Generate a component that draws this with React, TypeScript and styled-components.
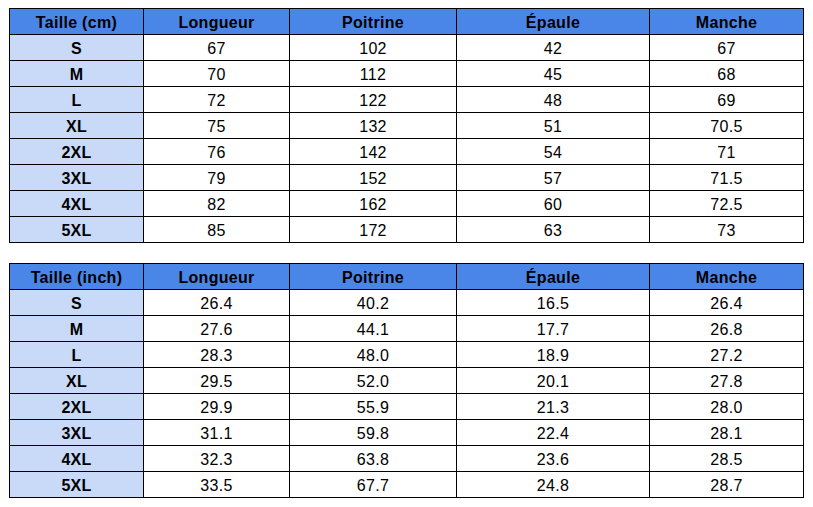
import React from "react";
import styled, { createGlobalStyle } from "styled-components";

const GlobalStyle = createGlobalStyle`
  html, body {
    margin: 0;
    padding: 0;
    background: #ffffff;
  }
`;

const Page = styled.div`
  display: flex;
  flex-direction: column;
  gap: 20px;
  padding: 8px 0 0 9px;
  font-family: "Liberation Sans", Arial, sans-serif;
`;

const Table = styled.table`
  border-collapse: collapse;
  table-layout: fixed;
  width: 795px;
  color: #000;
`;

const HeadCell = styled.th`
  background: #4a86e8;
  border: 1px solid #000;
  height: 26px;
  box-sizing: border-box;
  padding: 2px 0 0;
  line-height: 22px;
  font-size: 16px;
  font-weight: bold;
  letter-spacing: 0.3px;
  text-align: center;
`;

const SizeCell = styled.td`
  background: #c9daf8;
  border: 1px solid #000;
  height: 26px;
  box-sizing: border-box;
  padding: 2px 0 0;
  line-height: 22px;
  font-size: 16px;
  font-weight: bold;
  letter-spacing: 0.3px;
  text-align: center;
`;

const ValueCell = styled.td`
  background: #fff;
  border: 1px solid #000;
  height: 26px;
  box-sizing: border-box;
  padding: 2px 0 0;
  line-height: 22px;
  font-size: 16px;
  letter-spacing: 0.3px;
  text-align: center;
`;

const widths = [134, 146, 167, 193, 154];
const columns = ["Longueur", "Poitrine", "Épaule", "Manche"];

const cmRows: [string, string[]][] = [
  ["S", ["67", "102", "42", "67"]],
  ["M", ["70", "112", "45", "68"]],
  ["L", ["72", "122", "48", "69"]],
  ["XL", ["75", "132", "51", "70.5"]],
  ["2XL", ["76", "142", "54", "71"]],
  ["3XL", ["79", "152", "57", "71.5"]],
  ["4XL", ["82", "162", "60", "72.5"]],
  ["5XL", ["85", "172", "63", "73"]],
];

const inchRows: [string, string[]][] = [
  ["S", ["26.4", "40.2", "16.5", "26.4"]],
  ["M", ["27.6", "44.1", "17.7", "26.8"]],
  ["L", ["28.3", "48.0", "18.9", "27.2"]],
  ["XL", ["29.5", "52.0", "20.1", "27.8"]],
  ["2XL", ["29.9", "55.9", "21.3", "28.0"]],
  ["3XL", ["31.1", "59.8", "22.4", "28.1"]],
  ["4XL", ["32.3", "63.8", "23.6", "28.5"]],
  ["5XL", ["33.5", "67.7", "24.8", "28.7"]],
];

const SizeTable = ({ unit, rows }: { unit: string; rows: [string, string[]][] }) => (
  <Table>
    <colgroup>
      {widths.map((w, i) => (
        <col key={i} style={{ width: w }} />
      ))}
    </colgroup>
    <thead>
      <tr>
        <HeadCell>Taille ({unit})</HeadCell>
        {columns.map((c) => (
          <HeadCell key={c}>{c}</HeadCell>
        ))}
      </tr>
    </thead>
    <tbody>
      {rows.map(([size, values]) => (
        <tr key={size}>
          <SizeCell>{size}</SizeCell>
          {values.map((v, i) => (
            <ValueCell key={i}>{v}</ValueCell>
          ))}
        </tr>
      ))}
    </tbody>
  </Table>
);

export default function App() {
  return (
    <>
      <GlobalStyle />
      <Page>
        <SizeTable unit="cm" rows={cmRows} />
        <SizeTable unit="inch" rows={inchRows} />
      </Page>
    </>
  );
}
